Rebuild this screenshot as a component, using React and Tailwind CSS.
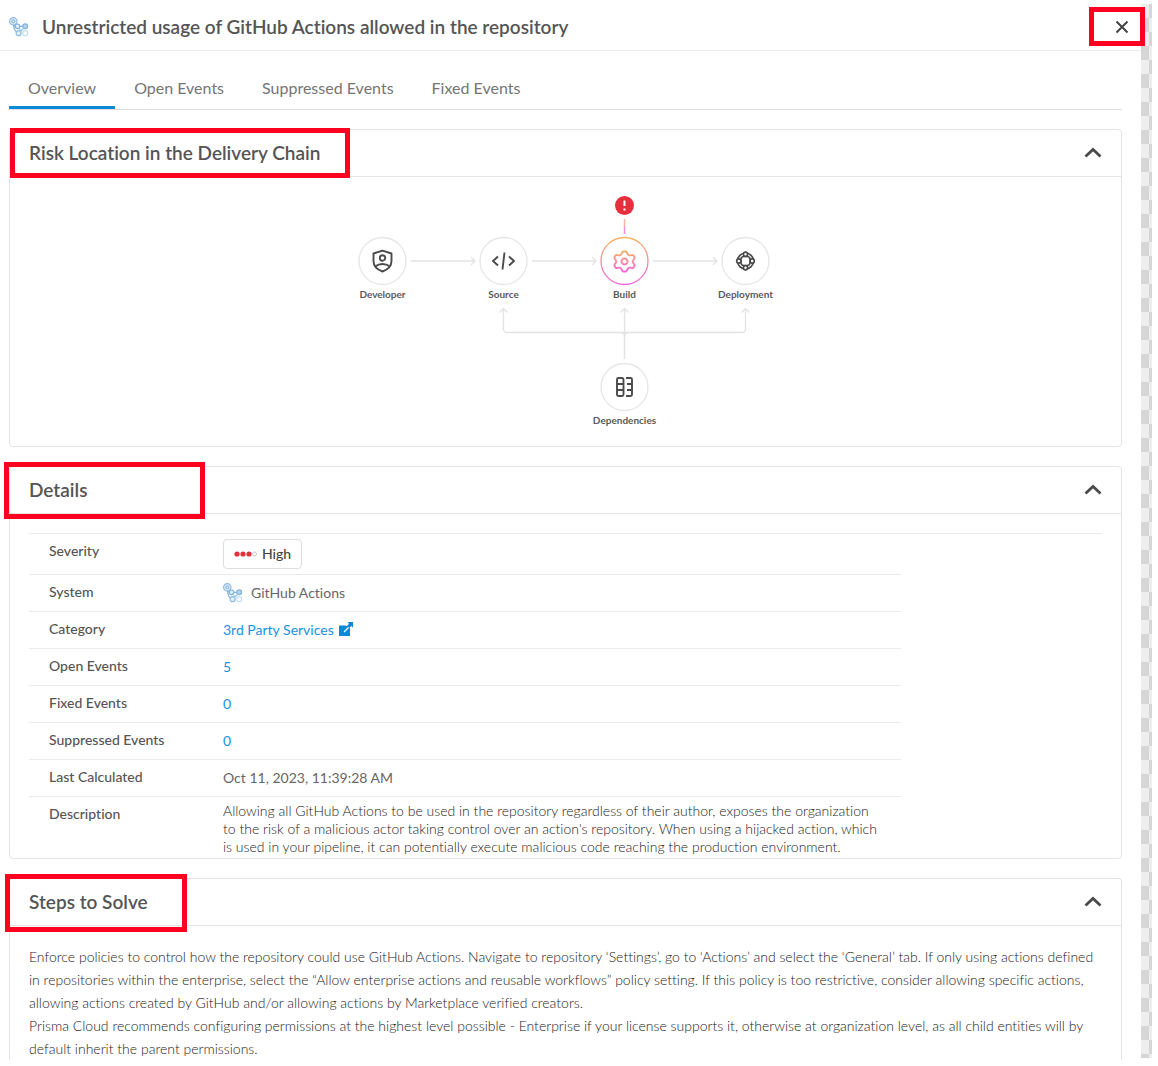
import React, { useState } from "react";

const TABS = ["Overview", "Open Events", "Suppressed Events", "Fixed Events"];

function ActionsLogo() {
  return (
    <svg width="20" height="20" viewBox="0 0 20 20" fill="none" aria-hidden="true" className="shrink-0">
      <g strokeWidth="1.2">
        <circle cx="4.3" cy="4.3" r="3.7" stroke="#8fbbe0" fill="#e3effa" />
        <circle cx="4.3" cy="4.3" r="1.5" stroke="#8fbbe0" />
        <path d="M4.500 8c.3 4 1.800 6.500 4 7.500" stroke="#7fb2dd" />
        <path d="M5 8.500l2 1M10.800 9.300h3" stroke="#7fb2dd" />
        <circle cx="8.500" cy="9.300" r="2.300" stroke="#7fb2dd" fill="#e3effa" />
        <circle cx="16.200" cy="9.300" r="2.400" stroke="#7fb2dd" fill="#b7d5ee" />
        <circle cx="9.600" cy="16.200" r="2.500" stroke="#8fbbe0" fill="#e3effa" />
        <circle cx="16.300" cy="16.200" r="2.500" stroke="#c3dff5" />
        <path d="M10.200 11l1.300 2.500M14.800 11l-3.300 3.500" stroke="#9cc6e8" />
      </g>
    </svg>
  );
}

function Chevron() {
  return (
    <svg width="18" height="12" viewBox="0 0 18 12" fill="none" stroke="#4a4a4a" strokeWidth="2.8" aria-hidden="true">
      <path d="M1.500 9.500L9 2.500l7.500 7" />
    </svg>
  );
}

function Card({ title, mark, children, last }) {
  const [open, setOpen] = useState(true);
  return (
    <section className={last ? "rounded-t border border-b-0 border-[#e4e4e4]" : "rounded border border-[#e4e4e4]"}>
      <div className="relative flex h-[47px] items-center justify-between border-b border-[#e4e4e4] pl-[19px] pr-[19px]">
        <h2 className="text-[19px] leading-6 font-semibold text-[#555]">{title}</h2>
        <button type="button" aria-label={"Toggle " + title} aria-expanded={open} onClick={() => setOpen(!open)}>
          <Chevron />
        </button>
        <span className={"pointer-events-none absolute border-[5px] border-[#ff0020] " + mark} />
      </div>
      {open && children}
    </section>
  );
}

function Node({ x, y, label, stroke = "#e6e6e6", children }) {
  return (
    <g>
      <circle cx={x} cy={y} r="23.500" stroke={stroke} strokeWidth="1.300" fill="#fff" />
      <g transform={`translate(${x} ${y})`} stroke="#4a4a4a" strokeWidth="1.900" strokeLinejoin="round">
        {children}
      </g>
      <text x={x} y={y + 37} textAnchor="middle" fill="#5a5a5a" className="text-[10px] font-bold">
        {label}
      </text>
    </g>
  );
}

function Chain() {
  return (
    <svg width="420" height="240" viewBox="356 190 420 240" fill="none" className="mx-auto max-w-full" role="img" aria-label="Delivery chain">
      <defs>
        <linearGradient id="warm" gradientUnits="userSpaceOnUse" x1="0" y1="238" x2="0" y2="285">
          <stop stopColor="#f5b461" />
          <stop offset="1" stopColor="#f75fe0" />
        </linearGradient>
        <linearGradient id="warmIcon" gradientUnits="userSpaceOnUse" x1="0" y1="-11" x2="0" y2="11">
          <stop stopColor="#f5b461" />
          <stop offset="1" stopColor="#f75fe0" />
        </linearGradient>
      </defs>
      <g stroke="#e2e4e4" strokeWidth="1.300">
        <path d="M411 261h64M471 257l4 4-4 4M532 261h64M592 257l4 4-4 4M653 261h64M713 257l4 4-4 4" />
        <path d="M503.500 309v20q0 3.500 3.500 3.500H742q3.500 0 3.500-3.500V309M624.500 309V359" />
        <path d="M499.500 312.500l4-4 4 4M620.500 312.500l4-4 4 4M741.500 312.500l4-4 4 4" />
        <path d="M621 332.500q3.500 0 3.500 4V359M628 332.500q-3.500 0-3.500 4" />
      </g>
      <path d="M624.500 219v7" stroke="#f5b99a" strokeWidth="1.500" />
      <path d="M624.500 226v8" stroke="#f78fdc" strokeWidth="1.500" />
      <circle cx="624.500" cy="205.500" r="9.500" fill="#e62e3d" />
      <path d="M624.500 200.500v5.500M624.500 208.500v2" stroke="#fff" strokeWidth="2" />
      <Node x={382.5} y={261} label="Developer">
        <path d="M0-10.300L9-7.500V0C9 5.500 5.500 8.500 0 10.500-5.500 8.500-9 5.500-9 0V-7.500Z" />
        <circle cx="0" cy="-3" r="2.700" />
        <path d="M-7.500 5.500Q-4 3 0 3T7.500 5.500" />
      </Node>
      <Node x={503.5} y={261} label="Source">
        <path d="M-5.500-4.500L-10.500 0l5 4.500M5.500-4.500L10.500 0l-5 4.500M1-8.500L-1 8.500" />
      </Node>
      <Node x={624.5} y={261} label="Build" stroke="url(#warm)">
        <g stroke="url(#warmIcon)" transform="translate(0 .5)">
          <path d="M-1.500-10h3c1.200 0 1.200 3.200 3 3.800s3.500-1 4.500 0l1 2c.8 1.500-1.800 2.500-1.800 4.200s2.600 2.700 1.800 4.200l-1 2c-1 1-2.700-.6-4.500 0s-1.800 3.800-3 3.800h-3c-1.200 0-1.200-3.200-3-3.800s-3.500 1-4.500 0l-1-2c-.8-1.500 1.800-2.500 1.800-4.200s-2.600-2.700-1.800-4.200l1-2c1-1 2.700 .6 4.500 0s1.800-3.800 3-3.800z" />
          <circle cx="0" cy="0" r="3" />
        </g>
      </Node>
      <Node x={745.5} y={261} label="Deployment">
        <circle cx="0" cy="0" r="8" strokeWidth="1.700" />
        <path d="M-4.500-1.500Q-4.500-4.500-1.500-4.500H1.500Q4.500-4.500 4.500-1.500V1.500Q4.500 4.500 1.500 4.500H-1.500Q-4.500 4.500-4.500 1.500Z" strokeWidth="1.500" />
        <g fill="#fff" strokeWidth="1.700">
          <circle cx="0" cy="-6.700" r="2.100" />
          <circle cx="0" cy="6.700" r="2.100" />
          <circle cx="-6.700" cy="0" r="2.100" />
          <circle cx="6.700" cy="0" r="2.100" />
        </g>
      </Node>
      <Node x={624.5} y={387} label="Dependencies">
        <rect x="-7.500" y="-9" width="6.500" height="18" rx="1.500" />
        <path d="M-7.500-3h6.500M-7.500 3h6.500M1.500-9h4.500q1.500 0 1.500 1.500v15q0 1.500-1.500 1.500h-4.500M2.500-3h5M2.500 3h5" />
      </Node>
    </svg>
  );
}

function Row({ label, first, last, children }) {
  return (
    <tr className={last ? "" : "border-b border-[#ebebeb]"}>
      <th
        scope="row"
        className="w-[194px] pt-2 pl-5 text-left align-top text-sm leading-[18px] font-medium text-[#555]"
      >
        {label}
      </th>
      <td
        className={
          (first
            ? "h-10 text-[#666]"
            : last
              ? "h-[62px] pt-1 pr-5 font-light text-[#222]"
              : "h-[37px] text-[#666]") + " text-sm leading-[18px]"
        }
      >
        {children}
      </td>
    </tr>
  );
}

export default function App() {
  const [tab, setTab] = useState(0);
  return (
    <div className="flex min-h-screen bg-white pt-1 pr-1.5 pb-1 font-['Lato',sans-serif] [font-variant-ligatures:none]">
      <main className="min-w-0 flex-1">
        <header className="relative flex h-[47px] items-center border-b border-[#ececec] pl-[9px] pr-2.5">
          <ActionsLogo />
          <h1 className="ml-[13px] flex-1 text-[19px] leading-6 font-semibold text-[#555]">
            Unrestricted usage of GitHub Actions allowed in the repository
          </h1>
          <button type="button" aria-label="Close" className="p-0.5">
            <svg width="14" height="14" viewBox="0 0 14 14" stroke="#444" strokeWidth="2" aria-hidden="true">
              <path d="M1.500 1.500l11 11M12.500 1.500l-11 11" />
            </svg>
          </button>
          <span className="pointer-events-none absolute top-[3px] -right-1 h-[39px] w-14 border-[5px] border-[#ff0020]" />
        </header>

        <div className="pl-[9px] pr-[19px]">
          <nav className="mt-4 flex h-[43px] border-b border-[#dedede]" role="tablist">
            {TABS.map((t, i) => (
              <button
                key={t}
                type="button"
                role="tab"
                aria-selected={tab === i}
                onClick={() => setTab(i)}
                className={
                  "h-[42px] border-b-[3px] px-[19px] pt-0.5 text-base text-[#757575] " +
                  (tab === i ? "border-[#0a8ad6]" : "border-transparent")
                }
              >
                {t}
              </button>
            ))}
          </nav>

          <div className="mt-[19px] flex flex-col gap-[19px]">
            <Card title="Risk Location in the Delivery Chain" mark="-top-0.5 left-0 h-[50px] w-[340px]">
              <div className="pt-[13px] pb-4">
                <Chain />
              </div>
            </Card>

            <Card title="Details" mark="-top-[5px] -left-1.5 h-[57px] w-[201px]">
              <div className="mx-[19px] mt-[19px] border-t border-[#ebebeb]">
                <table className="w-[872px] max-w-full border-collapse">
                  <tbody>
                    <Row label="Severity" first>
                      <span className="inline-flex h-[30px] items-center gap-1 rounded border border-[#dedede] px-2.5 font-medium text-[#444]">
                        <svg width="24" height="6" viewBox="0 0 24 6" aria-hidden="true">
                          <g fill="#e62e3d">
                            <circle cx="3" cy="3" r="2.600" />
                            <circle cx="9" cy="3" r="2.600" />
                            <circle cx="15" cy="3" r="2.600" />
                          </g>
                          <circle cx="20.500" cy="3" r="2" fill="none" stroke="#bbb" strokeWidth=".8" />
                        </svg>
                        High
                      </span>
                    </Row>
                    <Row label="System">
                      <span className="flex items-center gap-2">
                        <ActionsLogo />
                        GitHub Actions
                      </span>
                    </Row>
                    <Row label="Category">
                      <a href="#category" className="flex items-center gap-1 text-[#1593dc]">
                        3rd Party Services
                        <svg width="16" height="15" viewBox="0 0 16 15" fill="#0a8ad6" aria-hidden="true">
                          <path d="M1 3.500h11v10.500H1z" />
                          <path d="M8 0h8v8h-4v-4h-4z" fill="#fff" />
                          <path d="M11.500 4.500L6 10" stroke="#fff" strokeWidth="1.300" />
                          <path d="M9.500 0H15v5.500l-1.800-1.500-2 2-2.200-2.200 2-2z" />
                        </svg>
                      </a>
                    </Row>
                    <Row label="Open Events"><a href="#open" className="text-[#1593dc]">5</a></Row>
                    <Row label="Fixed Events"><a href="#fixed" className="text-[#1593dc]">0</a></Row>
                    <Row label="Suppressed Events"><a href="#suppressed" className="text-[#1593dc]">0</a></Row>
                    <Row label="Last Calculated">Oct 11, 2023, 11:39:28 AM</Row>
                    <Row label="Description" last>
                      Allowing all GitHub Actions to be used in the repository regardless of their author, exposes the
                      organization to the risk of a malicious actor taking control over an action's repository. When
                      using a hijacked action, which is used in your pipeline, it can potentially execute malicious code
                      reaching the production environment.
                    </Row>
                  </tbody>
                </table>
              </div>
            </Card>

            <Card title="Steps to Solve" mark="-top-[5px] -left-[5px] h-[58px] w-[182px]" last>
              <div className="px-[19px] pt-[19px] text-sm leading-[23px] font-light text-[#222]">
                <p>
                  Enforce policies to control how the repository could use GitHub Actions. Navigate to repository
                  ‘Settings’, go to ‘Actions’ and select the ‘General’ tab. If only using actions defined in
                  repositories within the enterprise, select the “Allow enterprise actions and reusable workflows”
                  policy setting. If this policy is too restrictive, consider allowing specific actions, allowing
                  actions created by GitHub and/or allowing actions by Marketplace verified creators.
                </p>
                <p>
                  Prisma Cloud recommends configuring permissions at the highest level possible - Enterprise if your
                  license supports it, otherwise at organization level, as all child entities will by default inherit
                  the parent permissions.
                </p>
              </div>
            </Card>
          </div>
        </div>
      </main>
      <div className="mb-1 w-[11px] bg-[conic-gradient(#d6d6d6_25%,#eeeeee_0_50%,#d6d6d6_0_75%,#eeeeee_0)] bg-[length:28px_28px] bg-[position:-6px_0px]" />
    </div>
  );
}
